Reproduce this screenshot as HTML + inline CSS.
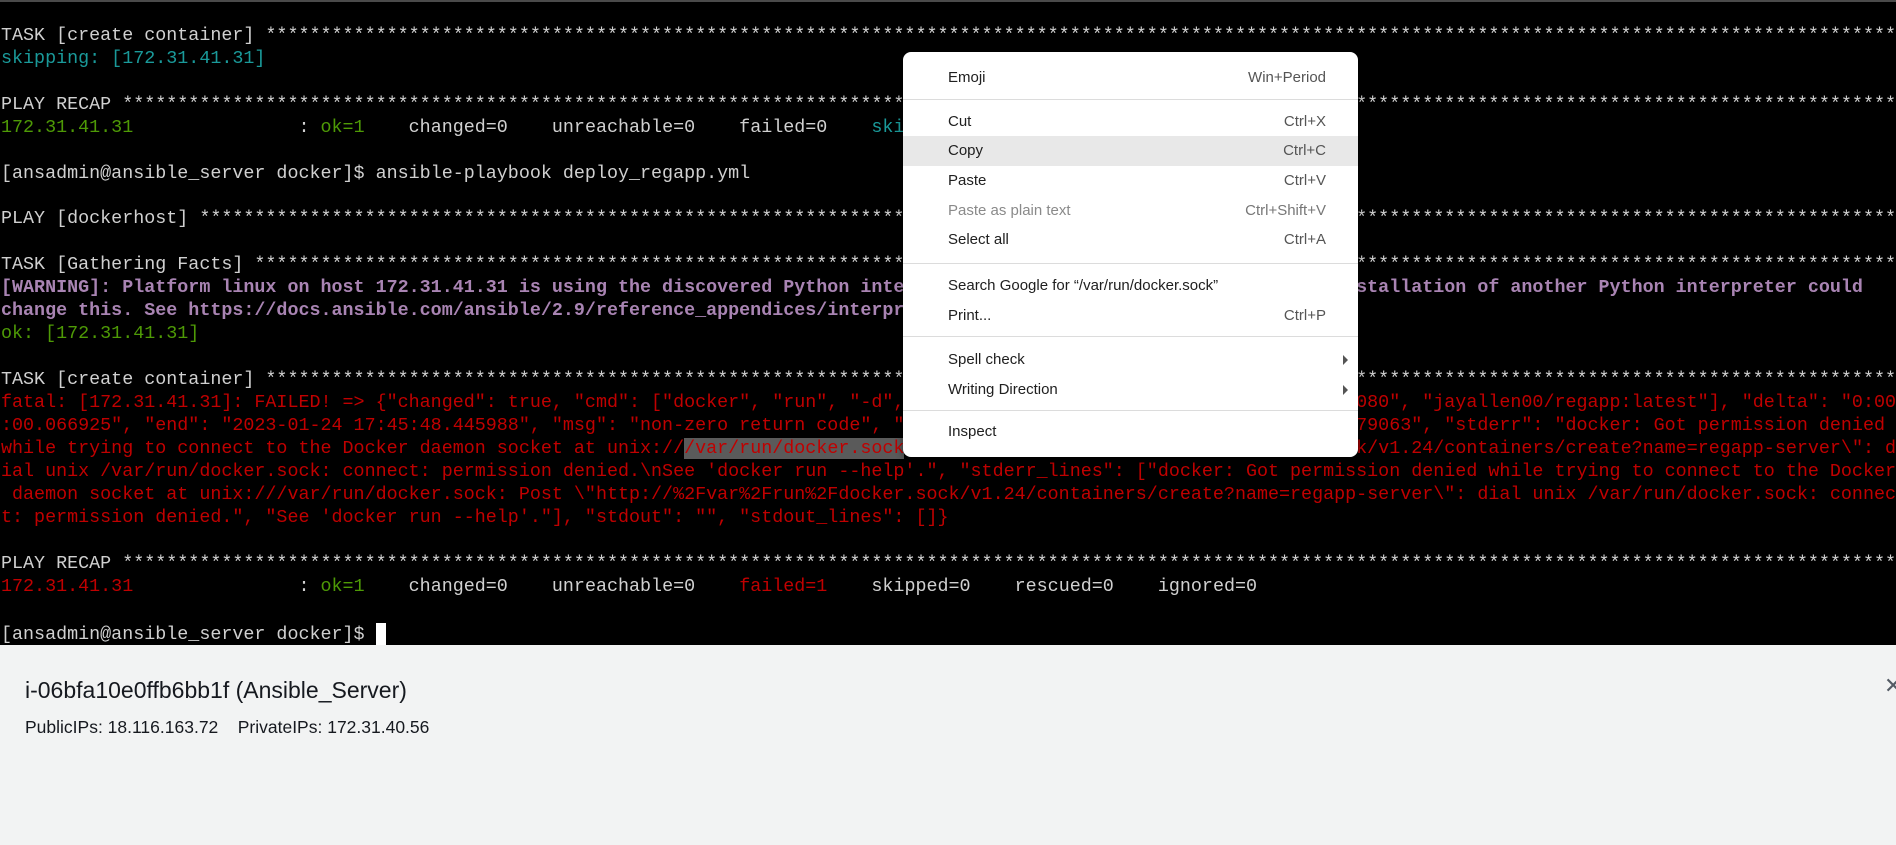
<!DOCTYPE html>
<html><head><meta charset="utf-8">
<style>
html,body{margin:0;padding:0;width:1896px;height:845px;overflow:hidden;background:#000;}
#term{position:absolute;left:0;top:0;width:1896px;height:645px;background:#000;border-top:2px solid #4a4a4a;box-sizing:border-box;}
.l{position:absolute;left:1px;height:23px;line-height:23px;font-family:"Liberation Mono",monospace;font-size:18.37px;white-space:pre;overflow:hidden;width:1895px;color:#d0d0d0;}
.w{color:#d0d0d0}.c{color:#1a9a9a}.g{color:#4e9a06}.r{color:#c00000}.p{color:#a984b3;font-weight:bold}
.sel{background:#5a5a5a;}
.cur{display:inline-block;width:10px;height:23px;background:#fff;vertical-align:top;}
#menu{position:absolute;left:903px;top:52px;width:455px;height:405px;background:#fff;border-radius:8px;box-shadow:0 2px 8px rgba(0,0,0,.45);font-family:"Liberation Sans",sans-serif;font-size:15px;color:#202020;}
.mi{position:absolute;left:0;width:455px;height:30px;line-height:30px;}
.mi .t{position:absolute;left:45px;}
.mi .k{position:absolute;right:32px;color:#555;}
.mi.dis{color:#8a8a8a}
.mi.hl{background:#e8e8e8}
.sep{position:absolute;left:0;width:455px;height:1px;background:#dcdcdc;}
.arr{position:absolute;right:10px;top:10px;width:0;height:0;border-top:5px solid transparent;border-bottom:5px solid transparent;border-left:5px solid #555;}
#panel{position:absolute;left:0;top:645px;width:1896px;height:200px;background:#f2f3f3;font-family:"Liberation Sans",sans-serif;color:#16191f;}
</style></head><body>
<div id="term">
<div class="l" style="top:22px"><span class="w">TASK [create container] ****************************************************************************************************************************************************************</span></div>
<div class="l" style="top:45px"><span class="c">skipping: [172.31.41.31]</span></div>
<div class="l" style="top:91px"><span class="w">PLAY RECAP *************************************************************************************************************************************************************************</span></div>
<div class="l" style="top:114px"><span class="g">172.31.41.31</span>               : <span class="g">ok=1</span>    changed=0    unreachable=0    failed=0    <span class="c">skipped=1</span>    rescued=0    ignored=0</div>
<div class="l" style="top:160px">[ansadmin@ansible_server docker]$ ansible-playbook deploy_regapp.yml</div>
<div class="l" style="top:205px">PLAY [dockerhost] ******************************************************************************************************************************************************************</div>
<div class="l" style="top:251px">TASK [Gathering Facts] *************************************************************************************************************************************************************</div>
<div class="l p" style="top:274px">[WARNING]: Platform linux on host 172.31.41.31 is using the discovered Python interpreter at /usr/bin/python, but future installation of another Python interpreter could</div>
<div class="l p" style="top:297px">change this. See https://docs.ansible.com/ansible/2.9/reference_appendices/interpreter_discovery.html for more information.</div>
<div class="l g" style="top:320px">ok: [172.31.41.31]</div>
<div class="l" style="top:366px">TASK [create container] ****************************************************************************************************************************************************************</div>
<div class="l r" style="top:389px">fatal: [172.31.41.31]: FAILED! =&gt; {"changed": true, "cmd": ["docker", "run", "-d", "--name", "regapp-server", "-p", "8082:8080", "jayallen00/regapp:latest"], "delta": "0:00</div>
<div class="l r" style="top:412px">:00.066925", "end": "2023-01-24 17:45:48.445988", "msg": "non-zero return code", "rc": 126, "start": "2023-01-24 17:45:48.379063", "stderr": "docker: Got permission denied</div>
<div class="l r" style="top:435px">while trying to connect to the Docker daemon socket at unix://<span class="sel">/var/run/docker.sock</span>: Post \"http://%2Fvar%2Frun%2Fdocker.sock/v1.24/containers/create?name=regapp-server\": d</div>
<div class="l r" style="top:458px">ial unix /var/run/docker.sock: connect: permission denied.\nSee 'docker run --help'.", "stderr_lines": ["docker: Got permission denied while trying to connect to the Docker</div>
<div class="l r" style="top:481px"> daemon socket at unix:///var/run/docker.sock: Post \"http://%2Fvar%2Frun%2Fdocker.sock/v1.24/containers/create?name=regapp-server\": dial unix /var/run/docker.sock: connec</div>
<div class="l r" style="top:504px">t: permission denied.", "See 'docker run --help'."], "stdout": "", "stdout_lines": []}</div>
<div class="l" style="top:550px">PLAY RECAP *************************************************************************************************************************************************************************</div>
<div class="l" style="top:573px"><span class="r">172.31.41.31</span>               : <span class="g">ok=1</span>    changed=0    unreachable=0    <span class="r">failed=1</span>    skipped=0    rescued=0    ignored=0</div>
<div class="l" style="top:621px">[ansadmin@ansible_server docker]$ <span class="cur"></span></div>
</div>

<div id="menu">
<div class="mi" style="top:11px"><span class="t">Emoji</span><span class="k">Win+Period</span></div>
<div class="sep" style="top:47px"></div>
<div class="mi" style="top:55px"><span class="t">Cut</span><span class="k">Ctrl+X</span></div>
<div class="mi hl" style="top:84px"><span class="t">Copy</span><span class="k">Ctrl+C</span></div>
<div class="mi" style="top:114px"><span class="t">Paste</span><span class="k">Ctrl+V</span></div>
<div class="mi dis" style="top:144px"><span class="t">Paste as plain text</span><span class="k" style="color:#777">Ctrl+Shift+V</span></div>
<div class="mi" style="top:173px"><span class="t">Select all</span><span class="k">Ctrl+A</span></div>
<div class="sep" style="top:211px"></div>
<div class="mi" style="top:219px"><span class="t">Search Google for “/var/run/docker.sock”</span></div>
<div class="mi" style="top:249px"><span class="t">Print...</span><span class="k">Ctrl+P</span></div>
<div class="sep" style="top:284px"></div>
<div class="mi" style="top:293px"><span class="t">Spell check</span><span class="arr"></span></div>
<div class="mi" style="top:323px"><span class="t">Writing Direction</span><span class="arr"></span></div>
<div class="sep" style="top:358px"></div>
<div class="mi" style="top:365px"><span class="t">Inspect</span></div>
</div>

<div id="panel">
<div style="position:absolute;left:25px;top:31px;font-size:23px;line-height:28px;">i-06bfa10e0ffb6bb1f (Ansible_Server)</div>
<div style="position:absolute;left:25px;top:71px;font-size:17.5px;line-height:22px;">PublicIPs: 18.116.163.72&nbsp;&nbsp;&nbsp; PrivateIPs: 172.31.40.56</div>
<div style="position:absolute;left:1884px;top:28px;font-size:22px;color:#545b64;">✕</div>
</div>
</body></html>
